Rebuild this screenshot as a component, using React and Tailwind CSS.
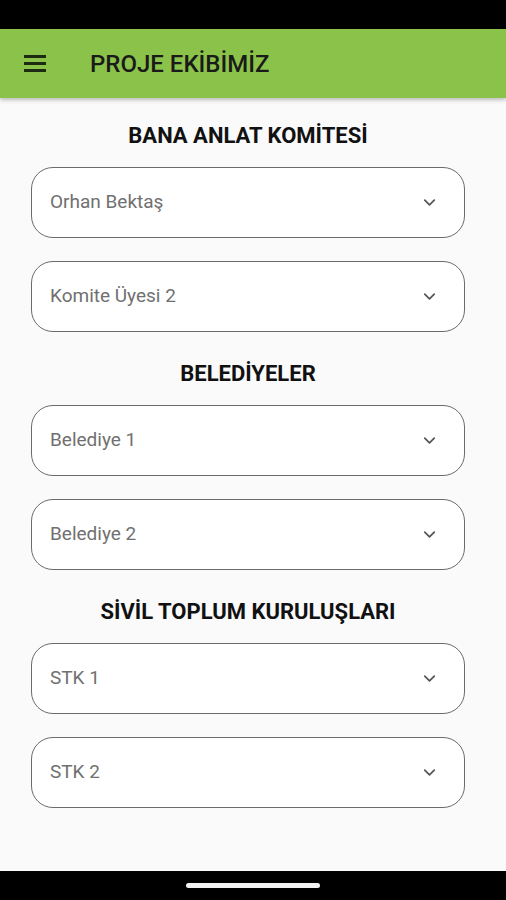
import { FiChevronDown } from 'react-icons/fi';

const sections = [
  { title: 'BANA ANLAT KOMİTESİ', items: ['Orhan Bektaş', 'Komite Üyesi 2'] },
  { title: 'BELEDİYELER', items: ['Belediye 1', 'Belediye 2'] },
  { title: 'SİVİL TOPLUM KURULUŞLARI', items: ['STK 1', 'STK 2'] },
];

const Dropdown = ({ label }) => (
  <div className="h-[71px] bg-white border-[1.5px] border-[#6b6b6b] rounded-[22px] flex items-center justify-between pl-[18px] pr-[25px]">
    <span className="text-[19px] text-[#707070]">{label}</span>
    <FiChevronDown className="w-[19px] h-[19px] text-[#555]" strokeWidth={2.2} />
  </div>
);

const App = () => {
  return (
    <div className="w-[506px] h-[900px] bg-[#fafafa] flex flex-col font-['Roboto',sans-serif]">
      {/* Status bar */}
      <div className="h-[29px] bg-black shrink-0" />

      {/* App bar */}
      <div className="h-[69px] bg-[#8bc34a] flex items-center shrink-0 shadow-[0_2px_4px_rgba(0,0,0,0.25)] relative z-10">
        <div className="w-[22px] ml-[24px] flex flex-col gap-[4.5px]">
          <div className="h-[2.5px] bg-[#1d2b12]" />
          <div className="h-[2.5px] bg-[#1d2b12]" />
          <div className="h-[2.5px] bg-[#1d2b12]" />
        </div>
        <h1 className="ml-[44px] text-[24px] font-medium text-[#1a1a1a]">PROJE EKİBİMİZ</h1>
      </div>

      {/* Content */}
      <div className="flex-1 pt-[24px] pl-[31px] pr-[41px]">
        {sections.map((section) => (
          <div key={section.title} className="mb-[28px]">
            <h2 className="text-center text-[22px] font-bold text-[#111] mb-[17px] leading-[28px]">{section.title}</h2>
            <div className="flex flex-col gap-[23px]">
              {section.items.map((item) => (
                <Dropdown key={item} label={item} />
              ))}
            </div>
          </div>
        ))}
      </div>

      {/* Nav bar */}
      <div className="h-[29px] bg-black shrink-0 flex items-center justify-center">
        <div className="w-[134px] h-[5px] rounded-full bg-[#f2f2f2]" />
      </div>
    </div>
  );
};

export default App;
